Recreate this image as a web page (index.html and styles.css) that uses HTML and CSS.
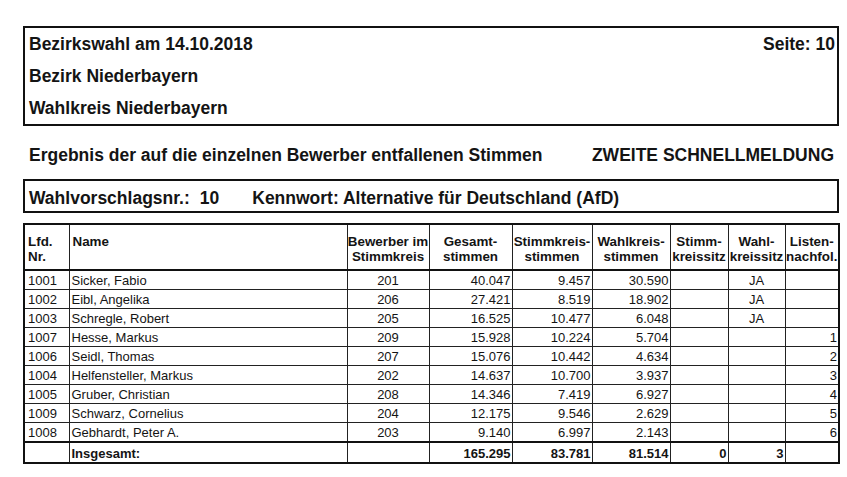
FILE: index.html
```html
<!DOCTYPE html>
<html lang="de">
<head>
<meta charset="utf-8">
<title>Bezirkswahl 2018</title>
<link rel="stylesheet" href="styles.css">
</head>
<body>
<div class="page">
  <div class="headbox">
    <div class="headline"><span>Bezirkswahl am 14.10.2018</span><span class="seite">Seite: 10</span></div>
    <div class="headline">Bezirk Niederbayern</div>
    <div class="headline">Wahlkreis Niederbayern</div>
  </div>
  <div class="subtitle"><span>Ergebnis der auf die einzelnen Bewerber entfallenen Stimmen</span><span>ZWEITE SCHNELLMELDUNG</span></div>
  <div class="partybox"><span>Wahlvorschlagsnr.:</span><span class="vnr">10</span><span class="kennwort">Kennwort: Alternative für Deutschland (AfD)</span></div>
  <table class="results">
    <colgroup>
      <col class="c-nr"><col class="c-name"><col class="c-bew"><col class="c-ges"><col class="c-sk"><col class="c-wk"><col class="c-sks"><col class="c-wks"><col class="c-list">
    </colgroup>
    <thead>
      <tr>
        <th class="left">Lfd.<br>Nr.</th>
        <th class="left">Name</th>
        <th>Bewerber im<br>Stimmkreis</th>
        <th>Gesamt-<br>stimmen</th>
        <th>Stimmkreis-<br>stimmen</th>
        <th>Wahlkreis-<br>stimmen</th>
        <th>Stimm-<br>kreissitz</th>
        <th>Wahl-<br>kreissitz</th>
        <th>Listen-<br>nachfol.</th>
      </tr>
    </thead>
    <tbody>
      <tr><td class="nr">1001</td><td class="name">Sicker, Fabio</td><td class="ctr">201</td><td class="num">40.047</td><td class="num">9.457</td><td class="num">30.590</td><td></td><td class="ctr">JA</td><td class="num"></td></tr>
      <tr><td class="nr">1002</td><td class="name">Eibl, Angelika</td><td class="ctr">206</td><td class="num">27.421</td><td class="num">8.519</td><td class="num">18.902</td><td></td><td class="ctr">JA</td><td class="num"></td></tr>
      <tr><td class="nr">1003</td><td class="name">Schregle, Robert</td><td class="ctr">205</td><td class="num">16.525</td><td class="num">10.477</td><td class="num">6.048</td><td></td><td class="ctr">JA</td><td class="num"></td></tr>
      <tr><td class="nr">1007</td><td class="name">Hesse, Markus</td><td class="ctr">209</td><td class="num">15.928</td><td class="num">10.224</td><td class="num">5.704</td><td></td><td></td><td class="num">1</td></tr>
      <tr><td class="nr">1006</td><td class="name">Seidl, Thomas</td><td class="ctr">207</td><td class="num">15.076</td><td class="num">10.442</td><td class="num">4.634</td><td></td><td></td><td class="num">2</td></tr>
      <tr><td class="nr">1004</td><td class="name">Helfensteller, Markus</td><td class="ctr">202</td><td class="num">14.637</td><td class="num">10.700</td><td class="num">3.937</td><td></td><td></td><td class="num">3</td></tr>
      <tr><td class="nr">1005</td><td class="name">Gruber, Christian</td><td class="ctr">208</td><td class="num">14.346</td><td class="num">7.419</td><td class="num">6.927</td><td></td><td></td><td class="num">4</td></tr>
      <tr><td class="nr">1009</td><td class="name">Schwarz, Cornelius</td><td class="ctr">204</td><td class="num">12.175</td><td class="num">9.546</td><td class="num">2.629</td><td></td><td></td><td class="num">5</td></tr>
      <tr><td class="nr">1008</td><td class="name">Gebhardt, Peter A.</td><td class="ctr">203</td><td class="num">9.140</td><td class="num">6.997</td><td class="num">2.143</td><td></td><td></td><td class="num">6</td></tr>
    </tbody>
    <tfoot>
      <tr class="total"><td class="nr"></td><td class="name">Insgesamt:</td><td></td><td class="num">165.295</td><td class="num">83.781</td><td class="num">81.514</td><td class="num">0</td><td class="num">3</td><td></td></tr>
    </tfoot>
  </table>
</div>
</body>
</html>
```

FILE: styles.css
```css
html, body {
  margin: 0;
  padding: 0;
  background: #ffffff;
}

body {
  font-family: "Liberation Sans", Arial, sans-serif;
  color: #141414;
}

.page {
  padding: 26px 0 0 23px;
  width: 816px;
}

.headbox {
  border: 2px solid #111;
  padding: 0 2px 0 4px;
  font-size: 17.5px;
  font-weight: bold;
}

.headline {
  display: flex;
  justify-content: space-between;
  height: 32px;
  line-height: 32px;
}

.subtitle {
  display: flex;
  justify-content: space-between;
  padding: 19px 5px 14px 6px;
  height: 20px;
  line-height: 20px;
  font-size: 17.5px;
  font-weight: bold;
}

.partybox {
  width: 808px;
  border: 2px solid #111;
  padding: 4px 0 0 4px;
  height: 26px;
  line-height: 26px;
  font-size: 17.5px;
  font-weight: bold;
}

.vnr {
  margin-left: 10px;
}

.kennwort {
  margin-left: 33px;
}

.results {
  margin-top: 10px;
  width: 815px;
  border-collapse: collapse;
  table-layout: fixed;
  border: 2px solid #111;
  font-size: 13px;
}

.c-nr { width: 45px; }
.c-name { width: 278px; }
.c-bew { width: 82px; }
.c-ges { width: 83px; }
.c-sk { width: 80px; }
.c-wk { width: 78px; }
.c-sks { width: 58px; }
.c-wks { width: 57px; }
.c-list { width: 54px; }

.results th {
  height: 35px;
  padding: 9px 0 0 0;
  vertical-align: top;
  text-align: center;
  font-size: 13.4px;
  font-weight: bold;
  line-height: 15px;
  border: 1px solid #222;
  border-bottom: 2px solid #111;
  white-space: nowrap;
}

.results th.left {
  text-align: left;
  padding-left: 3px;
}

.results td {
  height: 17px;
  padding: 1px 2px 0 2px;
  line-height: 17px;
  border: 1px solid #222;
  white-space: nowrap;
}

.results td.nr {
  padding-left: 3px;
}

.results td.name {
  padding-left: 2px;
}

.results td.ctr {
  text-align: center;
}

.results td.num {
  text-align: right;
  padding-right: 1px;
}

.results .total td {
  height: 18px;
  font-weight: bold;
  border-top: 2px solid #111;
}
```
